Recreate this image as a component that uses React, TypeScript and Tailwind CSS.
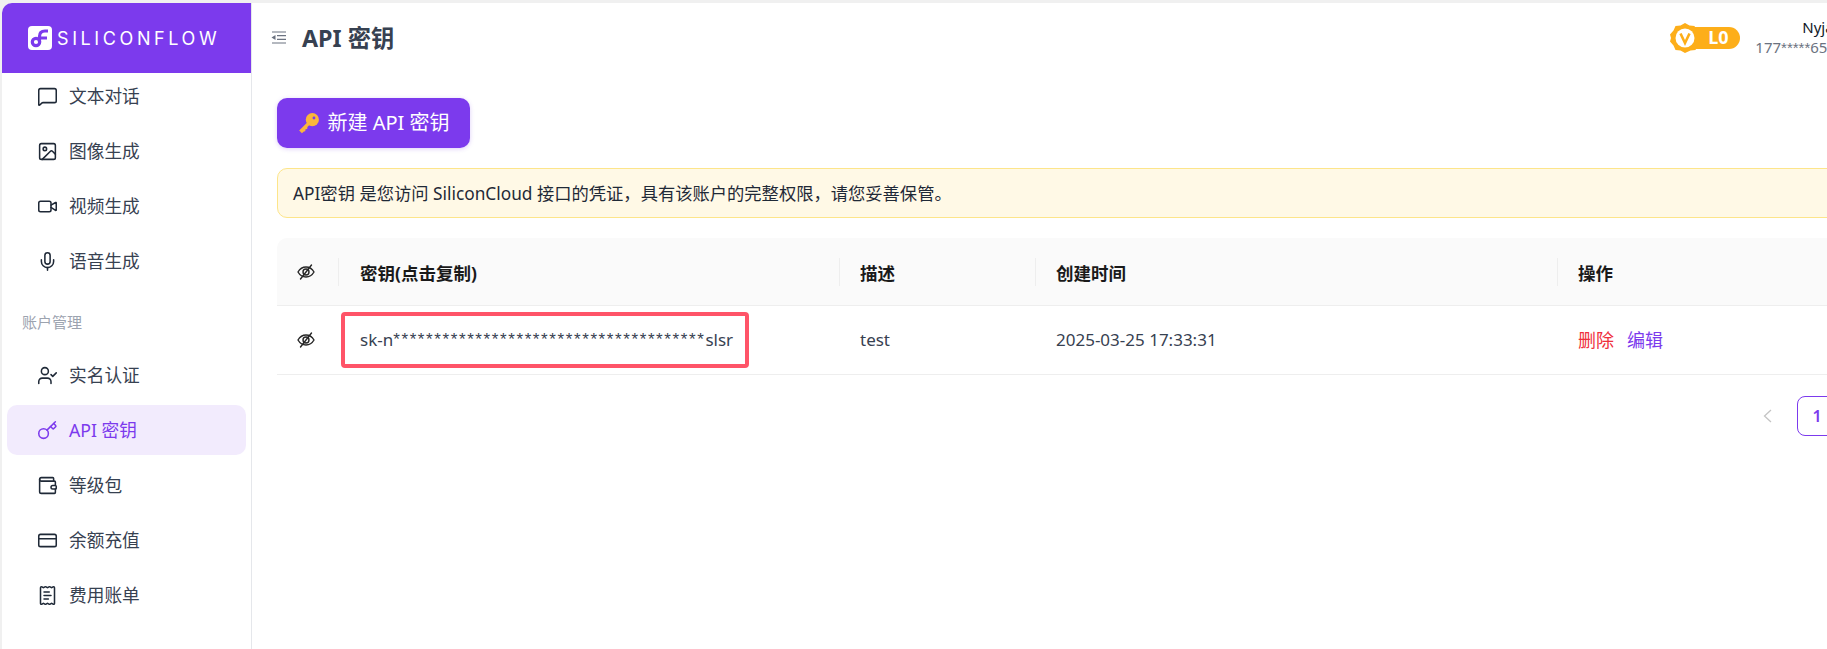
import {
  CreditCard,
  Image,
  Key,
  MessageSquare,
  Mic,
  ReceiptText,
  UserCheck,
  Video,
  Wallet,
} from 'lucide-react';
import type { ReactNode } from 'react';

const font = "font-['Noto_Sans','Noto_Sans_CJK_SC',sans-serif]";

const topItems = [
  { icon: <MessageSquare size={21} strokeWidth={1.75} />, label: '文本对话' },
  { icon: <Image size={21} strokeWidth={1.75} />, label: '图像生成' },
  { icon: <Video size={21} strokeWidth={1.75} />, label: '视频生成' },
  { icon: <Mic size={21} strokeWidth={1.75} />, label: '语音生成' },
];

const accountItems = [
  { icon: <UserCheck size={21} strokeWidth={1.75} />, label: '实名认证' },
  { icon: <Key size={21} strokeWidth={1.75} />, label: 'API 密钥', active: true },
  { icon: <Wallet size={21} strokeWidth={1.75} />, label: '等级包' },
  { icon: <CreditCard size={21} strokeWidth={1.75} />, label: '余额充值' },
  { icon: <ReceiptText size={21} strokeWidth={1.75} />, label: '费用账单' },
];

function NavItem({ icon, label, active }: { icon: ReactNode; label: string; active?: boolean }) {
  return (
    <div
      className={`mx-[5px] flex h-[50px] items-center gap-[11px] rounded-[10px] pl-[30px] text-[17.7px] ${
        active ? 'bg-[#f2ebfd] text-[#7c3aed]' : 'text-[#374151]'
      }`}
    >
      <span className={active ? 'text-[#7c3aed]' : 'text-[#1f2937]'}>{icon}</span>
      {label}
    </div>
  );
}

function EyeSlash() {
  return (
    <svg width="18" height="16" viewBox="0 0 18 16" fill="none" stroke="#262626" strokeWidth="1.4" strokeLinecap="round">
      <path d="M1 8c2-3.4 4.800-5 8-5s6 1.600 8 5c-2 3.400-4.800 5-8 5s-6-1.600-8-5z" />
      <circle cx="9" cy="8" r="3" />
      <path d="M14.500 1 3.500 15" />
    </svg>
  );
}

function MenuFold() {
  return (
    <svg width="15" height="13" viewBox="0 0 15 13" fill="none" stroke="#6b7280" strokeWidth="1.200">
      <path d="M1 1h14M6 4.700h9M6 8.300h9M1 12h14" />
      <path d="M0.500 6.500 4.500 4v5z" fill="#6b7280" stroke="none" />
    </svg>
  );
}

function LogoMark() {
  return (
    <svg width="24" height="24" viewBox="0 0 24 24">
      <rect width="24" height="24" rx="4" fill="#fff" />
      <path d="M11.500 16V10.500C11.500 6.800 13.500 5 17 5h3M11.500 12H19" fill="none" stroke="#7c3aed" strokeWidth="3.200" />
      <circle cx="8" cy="16" r="3.700" fill="none" stroke="#7c3aed" strokeWidth="3.200" />
    </svg>
  );
}

function LevelBadge() {
  return (
    <div className="flex items-center">
      <svg width="30" height="30" viewBox="0 0 30 30" className="z-10">
        <path
          d="M15 0l4.500 2.500 5 .5 2 4.500L30 11.500 29 15l1 3.500-2.500 4-2 4.500-5 .5L15 30l-4.500-2.500-5-.5-2-4.500L0 18.500 1 15l-1-3.500 3.500-4 2-4.500 5-.5z"
          fill="#fdae19"
        />
        <circle cx="15" cy="15" r="9.500" fill="#fff" />
        <path d="M10.500 10.500 15 20l4.500-9.500" fill="none" stroke="#fdae19" strokeWidth="2.600" />
      </svg>
      <div className="-ml-3 flex h-[22px] w-[52px] items-center justify-center rounded-r-full bg-[#fdae19] pl-2 text-[18px] font-bold text-white">
        L0
      </div>
    </div>
  );
}

export default function App() {
  return (
    <div className={`${font} flex h-[649px] w-[1827px] overflow-hidden bg-[#f0f0f0] pl-[2px] pt-[3px] text-[16px]`}>
      <aside className="flex w-[250px] shrink-0 flex-col overflow-hidden rounded-tl-[10px] border-r border-[#e5e7eb] bg-white">
        <div className="z-10 flex h-[70px] shrink-0 items-center gap-[5px] bg-[#7c3aed] pl-[26px]">
          <LogoMark />
          <span className="font-['Inter',sans-serif] text-[18px] font-normal tracking-[3.6px] text-white">SILICONFLOW</span>
        </div>
        <nav className="-mt-[2px] flex flex-col gap-[5px]">
          {topItems.map((item) => (
            <NavItem key={item.label} {...item} />
          ))}
        </nav>
        <div className="mt-[26px] mb-[18px] pl-[20px] text-[15px] leading-[20px] text-[#9ca3af]">账户管理</div>
        <nav className="flex flex-col gap-[5px]">
          {accountItems.map((item) => (
            <NavItem key={item.label} {...item} />
          ))}
        </nav>
      </aside>

      <main className="min-w-0 flex-1 overflow-hidden bg-white">
        <div className="w-[1700px]">
          <header className="flex h-[62px] items-center pl-[19px] pt-[7px]">
            <MenuFold />
            <h1 className="ml-[16px] mt-[2px] text-[23.3px] font-bold text-[#374151]">API 密钥</h1>
            <div className="ml-[1276px] flex items-center gap-[15px]">
              <LevelBadge />
              <div className="-mt-[1px] w-[130px] shrink-0 text-[15px] leading-[20px]">
                <div className="pl-[47px] text-[#111827]">Nyjason</div>
                <div className="text-[#6b7280]">
                  177<span className="font-['Liberation_Sans',sans-serif]">*****</span>6578
                </div>
              </div>
            </div>
          </header>

          <div className="pl-[25px]">
            <button className="mt-[33px] flex h-[50px] w-[193px] items-center justify-center gap-[7px] rounded-[10px] bg-[#7c3aed] text-[20px] text-white shadow-[0_1px_4px_rgba(124,58,237,0.25)]">
              <svg width="23" height="23" viewBox="0 0 21 21">
                <circle cx="14" cy="7" r="6" fill="#fbb63b" />
                <circle cx="15.500" cy="5.500" r="1.300" fill="#7c3aed" />
                <path d="M10 9 2 17l2.500 2.500 1.800-1.800 1.200-.2.300-1.700 1.500-.3.200-1.700 3-3z" fill="#fbb63b" />
              </svg>
              新建 API 密钥
            </button>

            <div className="mt-[20px] flex h-[50px] items-center rounded-[10px] border border-[#fde58a] bg-[#fff9e6] pl-[15px] pt-[2px] text-[17.3px] text-[#1f2937]">
              API密钥 是您访问 SiliconCloud 接口的凭证，具有该账户的完整权限，请您妥善保管。
            </div>

            <div className="mt-[20px] text-[17px] text-[#374151]">
              <div className="grid h-[68px] grid-cols-[62px_501px_196px_522px_1fr] items-center rounded-t-[10px] border-b border-[#eeeeee] bg-[#fafafa] text-[17.5px] font-bold text-[#1a1a1a]">
                <div className="flex h-7 items-center justify-center border-r border-[#eeeeee] pr-1">
                  <EyeSlash />
                </div>
                <div className="flex h-7 items-center border-r border-[#eeeeee] pl-[21px] pt-[4px]">密钥(点击复制)</div>
                <div className="flex h-7 items-center border-r border-[#eeeeee] pl-[20px] pt-[4px]">描述</div>
                <div className="flex h-7 items-center border-r border-[#eeeeee] pl-[20px] pt-[4px]">创建时间</div>
                <div className="flex h-7 items-center pl-[20px] pt-[4px]">操作</div>
              </div>
              <div className="grid h-[69px] grid-cols-[62px_501px_196px_522px_1fr] items-center border-b border-[#eeeeee]">
                <div className="flex items-center justify-center pr-1">
                  <EyeSlash />
                </div>
                <div className="pl-[3px]">
                  <div className="-ml-[1px] flex h-[56px] w-[408px] items-center rounded-[4px] border-[4px] border-[#ff5468] pl-[15px]">
                    sk-n
                    <span className="font-['Liberation_Sans',sans-serif] tracking-[1.6px]">
                      **************************************
                    </span>
                    slsr
                  </div>
                </div>
                <div className="pl-[20px]">test</div>
                <div className="pl-[20px]">2025-03-25 17:33:31</div>
                <div className="flex gap-[13px] pl-[20px] text-[18px]">
                  <span className="text-[#ef2f3c]">删除</span>
                  <span className="text-[#7c3aed]">编辑</span>
                </div>
              </div>
            </div>

            <div className="mt-[21px] flex h-10 items-center pl-[1485px]">
              <svg width="12" height="14" viewBox="0 0 12 14" fill="none" stroke="#c4c4c4" strokeWidth="1.300">
                <path d="M9 1 2.500 7 9 13" />
              </svg>
              <div className="ml-[23px] flex h-10 w-10 shrink-0 items-center justify-center rounded-[8px] border border-[#7c3aed] font-semibold text-[#7c3aed]">
                1
              </div>
            </div>
          </div>
        </div>
      </main>
    </div>
  );
}
